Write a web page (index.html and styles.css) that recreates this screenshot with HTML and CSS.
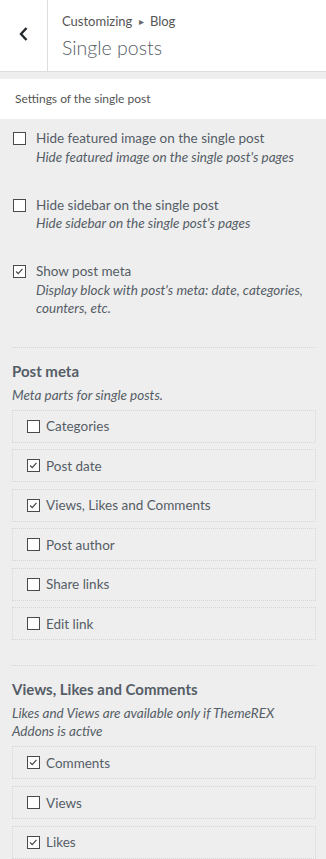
FILE: index.html
```html
<!DOCTYPE html>
<html>
<head>
<meta charset="utf-8">
<title>Single posts</title>
<link rel="stylesheet" href="styles.css">
</head>
<body>
<div class="header">
  <div class="back">
    <svg width="12" height="16" viewBox="0 0 12 16"><polyline points="8.5,2 3,8 8.5,14" fill="none" stroke="#23282d" stroke-width="2.4"/></svg>
  </div>
  <div class="title">
    <div class="action">Customizing <span class="sep">&#9656;</span> Blog</div>
    <h3>Single posts</h3>
  </div>
</div>

<div class="desc-block">Settings of the single post</div>

<div class="controls">
  <div class="check-item">
    <span class="cb"></span>
    <div class="text">
      <div class="lbl">Hide featured image on the single post</div>
      <div class="hint">Hide featured image on the single post's pages</div>
    </div>
  </div>
  <div class="check-item">
    <span class="cb"></span>
    <div class="text">
      <div class="lbl">Hide sidebar on the single post</div>
      <div class="hint">Hide sidebar on the single post's pages</div>
    </div>
  </div>
  <div class="check-item">
    <span class="cb"><svg viewBox="0 0 13 13"><polyline points="2.5,6.5 5,9 10,3.5" fill="none" stroke="#444" stroke-width="1.4"/></svg></span>
    <div class="text">
      <div class="lbl">Show post meta</div>
      <div class="hint">Display block with post's meta: date, categories, counters, etc.</div>
    </div>
  </div>

  <div class="divider"></div>

  <div class="group">
    <h4>Post meta</h4>
    <div class="hint">Meta parts for single posts.</div>
    <ul class="boxes">
      <li><span class="cb"></span>Categories</li>
      <li><span class="cb"><svg viewBox="0 0 13 13"><polyline points="2.5,6.5 5,9 10,3.5" fill="none" stroke="#444" stroke-width="1.4"/></svg></span>Post date</li>
      <li><span class="cb"><svg viewBox="0 0 13 13"><polyline points="2.5,6.5 5,9 10,3.5" fill="none" stroke="#444" stroke-width="1.4"/></svg></span>Views, Likes and Comments</li>
      <li><span class="cb"></span>Post author</li>
      <li><span class="cb"></span>Share links</li>
      <li><span class="cb"></span>Edit link</li>
    </ul>
  </div>

  <div class="divider"></div>

  <div class="group">
    <h4>Views, Likes and Comments</h4>
    <div class="hint">Likes and Views are available only if ThemeREX Addons is active</div>
    <ul class="boxes">
      <li><span class="cb"><svg viewBox="0 0 13 13"><polyline points="2.5,6.5 5,9 10,3.5" fill="none" stroke="#444" stroke-width="1.4"/></svg></span>Comments</li>
      <li><span class="cb"></span>Views</li>
      <li><span class="cb"><svg viewBox="0 0 13 13"><polyline points="2.5,6.5 5,9 10,3.5" fill="none" stroke="#444" stroke-width="1.4"/></svg></span>Likes</li>
    </ul>
  </div>
</div>
</body>
</html>
```

FILE: styles.css
```css
* { margin: 0; padding: 0; box-sizing: border-box; }
body { width: 326px; background: #eee; font-family: Lato, "Liberation Sans", sans-serif; font-size: 13.5px; color: #555d66; overflow: hidden; }
ul { list-style: none; }

.header { display: flex; height: 72px; background: #fff; border-bottom: 1px solid #ddd; }
.back { width: 48px; border-right: 1px solid #ddd; display: flex; justify-content: center; padding-top: 26px; }
.back svg { display: block; }
.title { padding: 9px 0 0 14px; }
.action { font-size: 13px; line-height: 24px; color: #555; }
.action .sep { font-size: 10px; color: #666; margin: 0 3px; position: relative; top: -1px; }
.title h3 { font-size: 19.5px; font-weight: 300; line-height: 28px; color: #555d66; }

.desc-block { margin-top: 7px; background: #fff; height: 40px; line-height: 40px; padding: 0 15px; font-size: 12px; color: #555; }

.controls { padding: 10px 10px 0 12px; }

.cb { width: 13px; height: 13px; border: 1px solid #4a4a4a; background: #fff; flex: none; display: block; }
.cb svg { display: block; width: 11px; height: 11px; }

.check-item { display: flex; gap: 10px; line-height: 18.5px; margin-bottom: 30px; }
.check-item .cb { margin: 3px 0 0 1px; }
.lbl { color: #555d66; }
.hint { font-style: italic; line-height: 18px; color: #555d66; }

.divider { border-top: 1px dotted #d6d6d6; margin-bottom: 13px; }

.group h4 { font-size: 15px; font-weight: 700; line-height: 20px; color: #555d66; margin-bottom: 5px; }
.group .hint { margin-bottom: 6px; }

.boxes { margin-bottom: 25px; }
.boxes li { display: flex; align-items: center; gap: 6px; height: 33px; padding-left: 14px; border: 1px dotted #d6d6d6; margin-bottom: 6.6px; }
```
